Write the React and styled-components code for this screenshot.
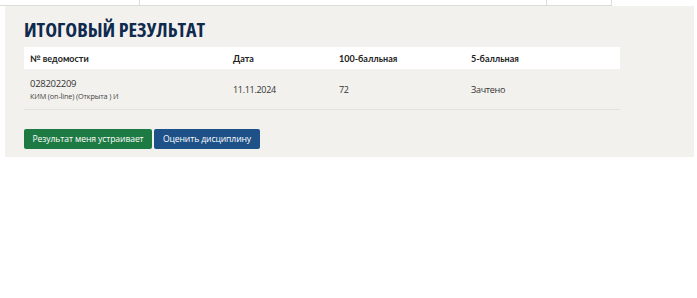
import React from "react";
import styled, { createGlobalStyle } from "styled-components";

const Global = createGlobalStyle`
  html, body { margin: 0; padding: 0; background: #fff; }
  body { font-family: "Open Sans", "Liberation Sans", sans-serif; }
`;

const TopStrip = styled.div`
  display: grid;
  grid-template-columns: 140px 407px 65px;
  height: 5px;
  width: 612px;
  border-bottom: 1px solid #dcdcd8;
  & > div { border-right: 1px solid #dcdcd8; }
`;

const Panel = styled.section`
  margin: 0 3px 0 5px;
  background: #f2f1ee;
  padding: 12px 74px 9px 19px;
  height: 130px;
`;

const Title = styled.h2`
  margin: 0 0 6px;
  font-family: "Open Sans", sans-serif;
  font-weight: 700;
  font-stretch: 87.5%;
  font-size: 20px;
  line-height: 23px;
  color: #102a4e;
`;

const Table = styled.table`
  width: 596px;
  border-collapse: collapse;
  table-layout: fixed;
`;

const HeadCell = styled.th`
  background: #fff;
  height: 22px;
  padding: 0 6px;
  text-align: left;
  font-family: Lato, sans-serif;
  font-weight: 700;
  font-size: 9px;
  color: #222;
  width: ${(p) => p.w}px;
`;

const Cell = styled.td`
  height: 40px;
  padding: 0 6px;
  border-bottom: 1px solid #e2e1dd;
  font-size: 9px;
  letter-spacing: -0.3px;
  color: #333;
  vertical-align: middle;
`;

const Main = styled.div`
  font-size: 9.5px;
  letter-spacing: -0.3px;
  line-height: 13px;
`;

const Sub = styled.div`
  font-size: 7.3px;
  letter-spacing: -0.15px;
  line-height: 12px;
  color: #444;
`;

const Buttons = styled.div`
  display: flex;
  gap: 2px;
  margin-top: 19px;
`;

const Button = styled.button`
  height: 20px;
  padding: 0;
  border: none;
  border-radius: 2px;
  background: ${(p) => (p.kind === "green" ? "#1d7a43" : "#1e5187")};
  color: #fff;
  font-family: "Open Sans", sans-serif;
  font-size: 8.6px;
  white-space: nowrap;
  letter-spacing: -0.1px;
  width: ${(p) => p.w}px;
`;

export default function App() {
  return (
    <>
      <Global />
      <TopStrip>
        <div />
        <div />
        <div />
      </TopStrip>
      <Panel>
        <Title>ИТОГОВЫЙ РЕЗУЛЬТАТ</Title>
        <Table>
          <thead>
            <tr>
              <HeadCell w={191}>№ ведомости</HeadCell>
              <HeadCell w={94}>Дата</HeadCell>
              <HeadCell w={120}>100-балльная</HeadCell>
              <HeadCell>5-балльная</HeadCell>
            </tr>
          </thead>
          <tbody>
            <tr>
              <Cell>
                <Main>028202209</Main>
                <Sub>КИМ (on-line) (Открыта ) И</Sub>
              </Cell>
              <Cell>11.11.2024</Cell>
              <Cell>72</Cell>
              <Cell>Зачтено</Cell>
            </tr>
          </tbody>
        </Table>
        <Buttons>
          <Button kind="green" w={128}>Результат меня устраивает</Button>
          <Button kind="blue" w={106}>Оценить дисциплину</Button>
        </Buttons>
      </Panel>
    </>
  );
}
